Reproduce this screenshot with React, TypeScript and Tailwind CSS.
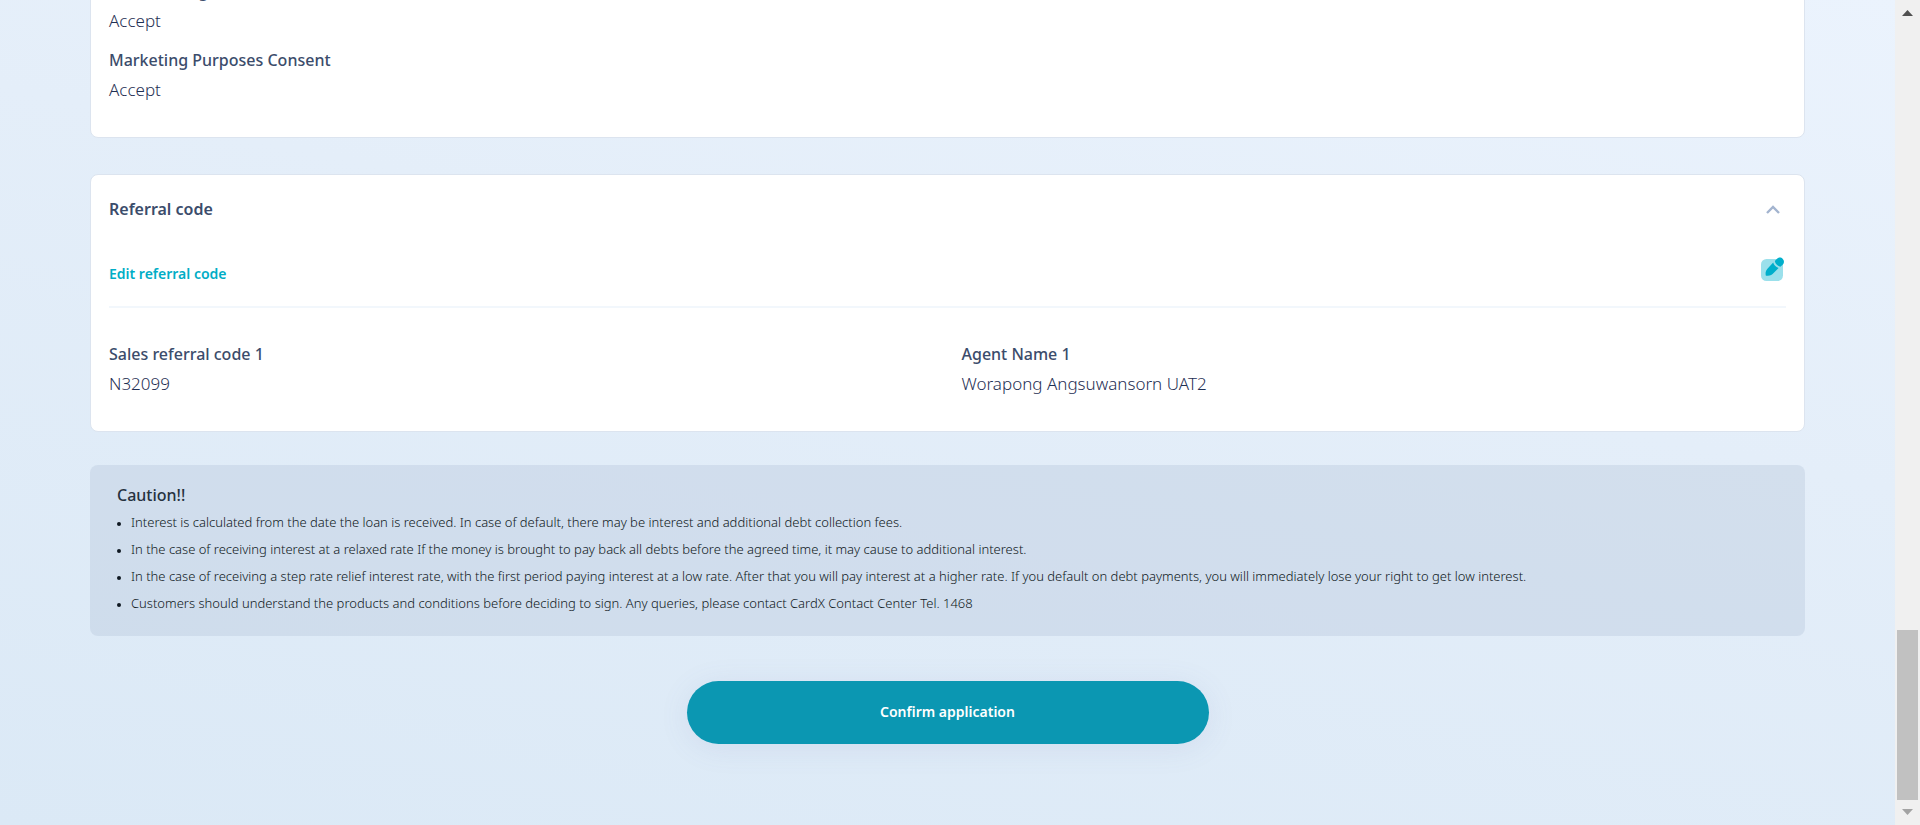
import { useState } from "react";

const cautions = [
  "Interest is calculated from the date the loan is received. In case of default, there may be interest and additional debt collection fees.",
  "In the case of receiving interest at a relaxed rate If the money is brought to pay back all debts before the agreed time, it may cause to additional interest.",
  "In the case of receiving a step rate relief interest rate, with the first period paying interest at a low rate. After that you will pay interest at a higher rate. If you default on debt payments, you will immediately lose your right to get low interest.",
  "Customers should understand the products and conditions before deciding to sign. Any queries, please contact CardX Contact Center Tel. 1468",
];

function Field({ label, value }: { label: string; value: string }) {
  return (
    <div>
      <dt className="text-base leading-[30px] font-medium">{label}</dt>
      <dd className="text-[17px] leading-[30px] font-light text-[#1f3054]">{value}</dd>
    </div>
  );
}

function EditIcon() {
  return (
    <svg width="24" height="24" viewBox="0 0 24 24" aria-hidden="true">
      <rect x="1" y="2" width="22" height="22" rx="5.5" fill="#9be0eb" />
      <path
        d="M13.2 5.6 C13.8 8 15.8 10.2 18.6 11 L12.6 17 C10.8 18.7 8.6 18.8 5.9 18.8 C5.3 16.6 5.3 14.3 7.2 12 Z"
        fill="#00afcb"
      />
      <path
        d="M14.8 4 L17.3 1.5 C19 0 21.4 0.4 22.8 1.9 C24.3 3.4 24.4 5.8 22.9 7.4 L20.4 9.7 C17.6 9.1 15.3 7 14.8 4 Z"
        fill="#00afcb"
      />
    </svg>
  );
}

function ScrollRail() {
  return (
    <div aria-hidden="true" className="sticky top-0 flex h-screen w-[25px] shrink-0 flex-col items-center bg-[#f0f0f0]">
      <svg className="mt-[10px] shrink-0" width="11" height="6" viewBox="0 0 11 6">
        <path d="M5.5 0 L11 6 H0 Z" fill="#505050" />
      </svg>
      <div className="grow" />
      <div className="h-[170px] w-[21px] bg-[#c1c1c1]" />
      <svg className="mt-[9px] mb-[10px] shrink-0" width="11" height="6" viewBox="0 0 11 6">
        <path d="M0 0 H11 L5.5 6 Z" fill="#a3a3a3" />
      </svg>
    </div>
  );
}

export default function App() {
  const [open, setOpen] = useState(true);

  return (
    <div className="flex min-h-screen bg-[linear-gradient(12deg,#dbe9f6,#e4eef9_60%,#ebf3fd)] font-['Noto_Sans','Open_Sans',sans-serif] text-[#3b4c6b]">
      <main className="min-w-0 flex-1 overflow-hidden px-[90px] pb-20">
        <section className="-mt-[25px] rounded-b-lg border border-[#dce4ef] bg-white px-[18px] pb-8">
          <dl className="flex flex-col gap-[9px]">
            <Field label="Data Sharing Consent" value="Accept" />
            <Field label="Marketing Purposes Consent" value="Accept" />
          </dl>
        </section>

        <section className="mt-9 rounded-lg border border-[#dce4ef] bg-white px-[18px] pb-8">
          <h2>
            <button
              type="button"
              aria-expanded={open}
              onClick={() => setOpen(!open)}
              className="flex w-full items-center justify-between pt-[19px] pr-[6px] text-left text-base leading-[30px] font-semibold"
            >
              Referral code
              <svg width="14" height="10" viewBox="0 0 14 10" aria-hidden="true">
                <path d="M1 9 L7 3 L13 9" stroke="#a3b4cf" strokeWidth="2.4" fill="none" />
              </svg>
            </button>
          </h2>
          {open && (
            <>
              <div className="mt-[33px] flex justify-between border-b-2 border-[#f2f7fc] pb-5">
                <span className="pt-[5px] text-sm leading-6 font-semibold text-[#00adc6]">Edit referral code</span>
                <button type="button" aria-label="Edit referral code" className="mr-[2px] h-6 w-6">
                  <EditIcon />
                </button>
              </div>
              <dl className="mt-[31px] grid grid-cols-2 gap-x-7">
                <Field label="Sales referral code 1" value="N32099" />
                <Field label="Agent Name 1" value="Worapong Angsuwansorn UAT2" />
              </dl>
            </>
          )}
        </section>

        <section className="mt-[33px] rounded-lg bg-[#bac8dc]/40 px-[27px] pt-4 pb-[19px] text-[#0f1822]">
          <h2 className="text-base leading-7 font-medium text-[#26323f]">Caution!!</h2>
          <ul className="list-disc pl-[14px] text-[13px] leading-[27px] font-light marker:text-[10px]">
            {cautions.map((c) => (
              <li key={c}>{c}</li>
            ))}
          </ul>
        </section>

        <div className="mt-[45px] flex justify-center">
          <button
            type="button"
            className="h-[63px] w-[522px] rounded-full bg-[#0b97b2] pb-[2px] text-sm font-semibold text-white shadow-[0_4px_30px_rgba(100,110,170,0.1)]"
          >
            Confirm application
          </button>
        </div>
      </main>
      <ScrollRail />
    </div>
  );
}
